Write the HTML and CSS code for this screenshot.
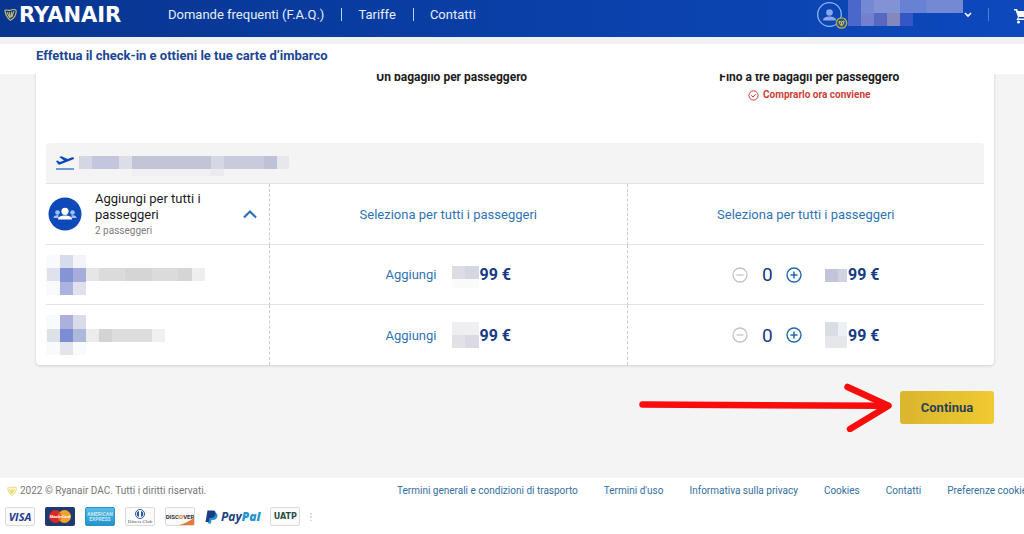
FILE: index.html
```html
<!DOCTYPE html>
<html lang="it">
<head>
<meta charset="utf-8">
<meta name="viewport" content="width=device-width, initial-scale=1">
<title>Ryanair - Bagagli</title>
<link rel="stylesheet" href="styles.css">
</head>
<body>
<svg width="0" height="0" class="defs" aria-hidden="true">
  <symbol id="harp" viewBox="0 0 14 14"><path d="M1 2.500C3 1.600 4.500 3 7 2.500S11 .5 13 2.500C13.500 7 11 11 7 13.300 4 11 1.500 7 1 2.500ZM3.200 4.500l3 6M5.500 4.500l1.500 6M8 4v6M10.500 3.500L8.500 9.500" fill="none" stroke="currentColor" stroke-width="1.200" stroke-linejoin="round"/></symbol>
  <symbol id="minus" viewBox="0 0 16 16"><circle cx="8" cy="8" r="7" fill="none" stroke="currentColor" stroke-width="1.300"/><path d="M4.500 8h7" stroke="currentColor" stroke-width="1.300"/></symbol>
  <symbol id="plus" viewBox="0 0 16 16"><circle cx="8" cy="8" r="7" fill="none" stroke="currentColor" stroke-width="1.400"/><path d="M4.500 8h7M8 4.500v7" stroke="currentColor" stroke-width="1.500"/></symbol>
</svg>

<header class="topbar">
  <a class="logo" href="#"><svg class="logo-harp" aria-hidden="true"><use href="#harp"/></svg><span>RYANAIR</span></a>
  <nav class="topnav">
    <a href="#">Domande frequenti (F.A.Q.)</a>
    <a href="#">Tariffe</a>
    <a href="#">Contatti</a>
  </nav>
  <div class="account">
    <button class="user" type="button" aria-label="Profilo">
      <svg width="31" height="30" viewBox="0 0 31 30" aria-hidden="true">
        <circle cx="12.500" cy="14.500" r="11.800" fill="none" stroke="#8fb4ee" stroke-width="1.300"/>
        <circle cx="12.500" cy="12.500" r="3.300" fill="#8ba8e8"/><path d="M6 20.500c0-3 3-4 6.500-4s6.500 1 6.500 4z" fill="#8ba8e8"/>
        <circle cx="24.500" cy="23" r="5.200" fill="#2f5588" stroke="#b5ad55" stroke-width="1.300"/>
        <path d="M22 21.500q2.500 1 5-.5-.3 3.500-2.500 5-2.300-2-2.500-4.500zM24.500 22v3" fill="none" stroke="#d2c95c"/>
      </svg>
      <svg width="115" height="37" viewBox="0 0 115 37" shape-rendering="crispEdges" aria-hidden="true">
        <path d="M0 0h115v13H0z" fill="#6782d4"/><path d="M0 0h13v26H0z" fill="#4b67cc"/><path d="M13 0h13v13H13zM78 0h37v13H78z" fill="#7489d4"/><path d="M26 0h26v13H26z" fill="#8193d5"/>
        <path d="M13 13h13v13H13z" fill="#7380cb"/><path d="M26 13h13v13H26z" fill="#5768bf"/><path d="M39 13h13v13H39z" fill="#8588bc"/><path d="M52 13h13v13H52z" fill="#3557c5"/>
      </svg>
      <svg width="10" height="8" viewBox="0 0 10 8" aria-hidden="true"><path d="M2 2l3 3 3-3" fill="none" stroke="#fff" stroke-width="1.600"/></svg>
    </button>
    <button class="cart" type="button" aria-label="Carrello">
      <svg width="10" height="16" viewBox="0 0 10 16" aria-hidden="true"><path d="M0 1h3l1 2h6v6H5l-.8 1.600H10v1.500H2.500L4 9 1.600 2.400H0z" fill="#fff"/><circle cx="4.500" cy="14" r="1.500" fill="#fff"/></svg>
    </button>
  </div>
</header>

<div class="titlebar"><h1>Effettua il check-in e ottieni le tue carte d’imbarco</h1></div>

<main class="content">
  <section class="card">
    <table class="bags">
      <colgroup><col class="col-pax"><col><col></colgroup>
      <thead>
        <tr>
          <td></td>
          <th scope="col">Un bagaglio per passeggero</th>
          <th scope="col">Fino a tre bagagli per passeggero
            <span class="deal"><svg width="11" height="11" viewBox="0 0 11 11" aria-hidden="true"><circle cx="5.500" cy="5.500" r="4.600" fill="none" stroke="currentColor"/><path d="M3.200 5.300l1.800 1.700 2.800-2.900" fill="none" stroke="currentColor"/></svg>Comprarlo ora conviene</span>
          </th>
        </tr>
      </thead>
      <tbody>
        <tr class="flight">
          <td colspan="3"><div class="flight-in">
            <svg width="20" height="16" viewBox="0 0 20 16" aria-hidden="true"><path d="M1 6l1.500-.6L4.800 7 9 5.400 4.300 1.900 6.400 1.200 12.600 4.100 16.500 2.600c1-.4 2.200-.3 2.500.3.200.7-.4 1.300-1.300 1.700L5 9.500c-.9.300-1.500.1-2-.4z" fill="#0d47b8"/><path d="M1 14h18" stroke="#3d70c6" stroke-width="1.400"/></svg>
            <svg width="210" height="26" viewBox="0 0 210 26" shape-rendering="crispEdges" aria-hidden="true">
              <path d="M0 6h210v13H0z" fill="#d5d6e3"/><path d="M13 6h27v13H13z" fill="#c3c6dd"/><path d="M40 6h13v13H40z" fill="#dcdde7"/><path d="M53 6h79v13H53z" fill="#c3c4d7"/><path d="M132 6h13v13h-13z" fill="#d5d7e4"/><path d="M145 6h40v13h-40z" fill="#c9cadb"/><path d="M185 6h13v13h-13z" fill="#bfc1d6"/><path d="M198 6h12v13h-12z" fill="#e7e7ed"/><path d="M53 19h79v8H53z" fill="#f0f0f3"/><path d="M132 19h13v8h-13z" fill="#ebebef"/>
            </svg>
          </div></td>
        </tr>
        <tr class="everyone">
          <td><div class="all">
            <svg class="group" width="34" height="34" viewBox="0 0 34 34" aria-hidden="true"><circle cx="17" cy="17" r="16.500" fill="#0e49b9"/><g fill="#9fc0f0"><circle cx="9.500" cy="15.500" r="2.300"/><circle cx="24.500" cy="15.500" r="2.300"/><path d="M5.500 21c0-2.300 2-3 5-3v3zM28.500 21c0-2.300-2-3-5-3v3z"/></g><circle cx="17" cy="14.300" r="3.600" fill="#fff"/><path d="M10 22.500c0-3 3-4 7-4s7 1 7 4z" fill="#fff"/></svg>
            <div class="all-text"><div class="all-name">Aggiungi per tutti i passeggeri</div><div class="all-count">2 passeggeri</div></div>
            <button class="toggle" type="button" aria-label="Comprimi"><svg width="14" height="10" viewBox="0 0 14 10" aria-hidden="true"><path d="M1 8.500l6-6 6 6" fill="none" stroke="#2d6fb5" stroke-width="2.200"/></svg></button>
          </div></td>
          <td class="center"><button class="link" type="button">Seleziona per tutti i passeggeri</button></td>
          <td class="center"><button class="link" type="button">Seleziona per tutti i passeggeri</button></td>
        </tr>
        <tr>
          <td><svg class="pax" width="160" height="40" viewBox="0 0 160 40" shape-rendering="crispEdges" aria-hidden="true">
            <path d="M0 0h40v40H0z" fill="#f8fafd"/><path d="M14 0h13v13H14z" fill="#d6dcea"/><path d="M27 0h13v13H27z" fill="#f2f4f9"/><path d="M1 13h13v13H1zM27 27h13v13H27z" fill="#dfe2ec"/><path d="M14 13h13v14H14z" fill="#8594d5"/><path d="M27 13h13v14H27z" fill="#a7addb"/><path d="M14 27h13v13H14z" fill="#acb3e0"/><path d="M40 13h13v13H40z" fill="#e6e6e7"/><path d="M53 13h93v13H53z" fill="#dadbda"/><path d="M79 13h27v13H79zM132 13h14v13h-14z" fill="#d4d5d4"/><path d="M146 13h13v13h-13z" fill="#eee"/>
          </svg></td>
          <td><div class="offer one"><button class="link" type="button">Aggiungi</button><span class="price"><svg width="28" height="26" viewBox="0 0 28 26" shape-rendering="crispEdges" aria-hidden="true"><path d="M0 4h27v13H0z" fill="#dcdde4"/><path d="M13 4h14v13H13z" fill="#d4d6e0"/><path d="M0 17h27v9H0z" fill="#fafafb"/></svg>99 €</span></div></td>
          <td><div class="offer many"><span class="stepper"><button type="button" aria-label="Rimuovi" disabled><svg aria-hidden="true"><use href="#minus"/></svg></button><output>0</output><button type="button" aria-label="Aggiungi"><svg aria-hidden="true"><use href="#plus"/></svg></button></span><span class="price"><svg width="22" height="26" viewBox="0 0 22 26" shape-rendering="crispEdges" aria-hidden="true"><path d="M0 7h22v13H0z" fill="#c2c4d8"/><path d="M13 7h9v13h-9z" fill="#d0d2e2"/></svg>99 €</span></div></td>
        </tr>
        <tr>
          <td><svg class="pax" width="160" height="40" viewBox="0 0 160 40" shape-rendering="crispEdges" aria-hidden="true">
            <path d="M0 0h40v40H0z" fill="#f8fafd"/><path d="M14 0h13v14H14z" fill="#acb0dd"/><path d="M27 0h13v14H27z" fill="#d8dce8"/><path d="M1 14h13v13H1z" fill="#dfe1e8"/><path d="M14 14h13v13H14z" fill="#7d8dd3"/><path d="M27 14h13v13H27z" fill="#adb8dd"/><path d="M14 27h13v13H14z" fill="#e3e4ec"/><path d="M40 14h13v13H40z" fill="#ececed"/><path d="M53 14h53v13H53z" fill="#dddddd"/><path d="M53 14h13v13H53z" fill="#d4d3d4"/><path d="M106 14h13v13h-13z" fill="#f0f0f3"/>
          </svg></td>
          <td><div class="offer one"><button class="link" type="button">Aggiungi</button><span class="price"><svg width="28" height="26" viewBox="0 0 28 26" shape-rendering="crispEdges" aria-hidden="true"><path d="M0 0h27v13H0z" fill="#efeff2"/><path d="M0 13h27v13H0z" fill="#e1e2e8"/><path d="M13 13h14v13H13z" fill="#d9dae3"/></svg>99 €</span></div></td>
          <td><div class="offer many"><span class="stepper"><button type="button" aria-label="Rimuovi" disabled><svg aria-hidden="true"><use href="#minus"/></svg></button><output>0</output><button type="button" aria-label="Aggiungi"><svg aria-hidden="true"><use href="#plus"/></svg></button></span><span class="price"><svg width="22" height="26" viewBox="0 0 22 26" shape-rendering="crispEdges" aria-hidden="true"><path d="M0 0h22v26H0z" fill="#e5e7ea"/><path d="M0 0h13v14H0z" fill="#dadde3"/><path d="M13 0h9v14h-9z" fill="#edf0f6"/></svg>99 €</span></div></td>
        </tr>
      </tbody>
    </table>
  </section>

  <div class="actions">
    <svg width="254" height="50" viewBox="0 0 254 50" aria-hidden="true"><path d="M4.500 22.500L246 23.800" fill="none" stroke="#f80c0c" stroke-width="6.500" stroke-linecap="round"/><path d="M209.500 5L250.500 23.800 212 47" fill="none" stroke="#f80c0c" stroke-width="6.500" stroke-linecap="round" stroke-linejoin="round"/></svg>
    <button class="continue" type="button">Continua</button>
  </div>
</main>

<footer class="footer">
  <div class="legal">
    <div class="copy"><svg class="copy-harp" aria-hidden="true"><use href="#harp"/></svg>2022 © Ryanair DAC. Tutti i diritti riservati.</div>
    <nav class="links">
      <a href="#">Termini generali e condizioni di trasporto</a><a href="#">Termini d'uso</a><a href="#">Informativa sulla privacy</a><a href="#">Cookies</a><a href="#">Contatti</a><a href="#">Preferenze cookie</a>
    </nav>
  </div>
  <div class="cards">
    <span class="pay visa">VISA</span>
    <span class="pay mc"><svg width="30" height="19" viewBox="0 0 30 19" aria-hidden="true"><circle cx="10.500" cy="9.500" r="6.500" fill="#d92a25"/><circle cx="19.500" cy="9.500" r="6.500" fill="#f3a22c"/><path d="M15 5a6.500 6.500 0 0 1 0 9 6.500 6.500 0 0 1 0-9z" fill="#e8692a"/></svg><span class="mc-name">MasterCard</span></span>
    <span class="pay amex"><span>AMERICAN</span><span>EXPRESS</span></span>
    <span class="pay diners"><svg width="12" height="10" viewBox="0 0 12 10" aria-hidden="true"><circle cx="6" cy="5" r="4.500" fill="#fff" stroke="#2459a0"/><path d="M5 2v6a3.100 3.100 0 0 1 0-6zM7 2v6a3.100 3.100 0 0 0 0-6z" fill="#2459a0"/></svg><span>Diners Club</span></span>
    <span class="pay discover"><svg class="swoosh" width="30" height="19" viewBox="0 0 30 19" aria-hidden="true"><path d="M9 19Q22 17 30 10v7q0 2-2 2z" fill="#e87935"/></svg><span>DISC<b>O</b>VER</span></span>
    <span class="paypal"><svg width="13" height="14" viewBox="0 0 13 14" aria-hidden="true"><path d="M4.500 3h5c3 0 3.500 2 2.800 4S10 10 8 10H6.500L6 13.500H3z" fill="#2694d4"/><path d="M2.500.5h5c3 0 3.600 1.800 3 4S8 8 6 8H4.500l-.8 4H.5z" fill="#173d86"/></svg><span>Pay<b>Pal</b></span></span>
    <span class="pay uatp">UATP</span>
    <svg width="3" height="10" viewBox="0 0 3 10" aria-hidden="true"><path d="M1 1v2M1 4v2M1 8v1" stroke="#c5bd9e"/></svg>
  </div>
</footer>
</body>
</html>
```
FILE: styles.css
```css
* { box-sizing: border-box; }
body {
  margin: 0;
  min-height: 100vh;
  display: flex;
  flex-direction: column;
  background: #f4f4f4;
  color: #1c1c1c;
  font-family: Roboto, "Liberation Sans", sans-serif;
  font-size: 13px;
  overflow-x: hidden;
}
svg { display: block; flex: none; }
a { color: inherit; text-decoration: none; }
button { font: inherit; color: inherit; background: none; border: 0; padding: 0; cursor: pointer; }
.defs { position: absolute; }

.topbar {
  display: flex;
  height: 37px;
  padding-left: 4px;
  color: #e4eefc;
  background: linear-gradient(90deg, #073590, #0d49bd);
  overflow: hidden;
}
.logo { display: flex; align-items: center; gap: 2px; width: 164px; height: 29px; color: #fff; font: bold 21px "DejaVu Sans", sans-serif; }
.logo-harp { width: 13px; height: 13px; color: #c9c16b; }
.topnav { display: flex; align-items: center; height: 29px; }
.topnav a { line-height: 13px; }
.topnav a + a { margin-left: 17px; padding-left: 16px; border-left: 1px solid #b9d2f5; }
.account { display: flex; margin-left: auto; }
.user { display: flex; align-items: flex-start; height: 37px; }
.user svg:last-child { margin-top: 11px; }
.cart { display: flex; height: 13px; margin: 8px 0 0 15px; padding-left: 25px; border-left: 1px solid #4f7fd4; }

.titlebar { padding: 4px 36px 0; height: 37px; background: #fff; border-top: 7px solid #f0f1f2; }
.titlebar h1 { margin: 0; font-size: 13px; line-height: 16px; color: #1c4594; }

.content { padding: 0 30px 46px 36px; overflow: hidden; }
.card { padding: 0 10px; background: #fff; border-radius: 0 0 4px 4px; box-shadow: 0 1px 3px #cfcfcf; }
.bags { width: 100%; table-layout: fixed; border-collapse: separate; border-spacing: 0; margin-top: -5px; }
.col-pax { width: 223px; }
.bags td, .bags th { padding: 0; }
.bags thead tr { height: 74px; }
.bags th { vertical-align: top; padding-left: 8px; font-size: 12px; font-weight: bold; line-height: 16px; color: #1c1c1c; }
.deal { display: flex; justify-content: center; align-items: center; gap: 4px; margin-top: 2px; color: #cc4038; font-size: 10px; font-weight: bold; }
.bags tbody td { height: 60px; border-bottom: 1px solid #e3e3e5; }
.bags tbody td + td { border-left: 1px dashed #ccc; }
.bags tbody tr:last-child td { border-bottom: 0; }
.bags tbody .flight td { height: 41px; }
.bags tbody .everyone td { height: 61px; }
.flight td { background: #f4f4f4; border-radius: 4px 4px 0 0; }
.flight-in { display: flex; align-items: center; gap: 4px; padding-left: 9px; }

.all { display: flex; align-items: center; padding: 0 12px 0 2px; }
.all-text { width: 124px; margin-left: 13px; line-height: 16px; }
.all-name { padding-top: 2px; font-size: 13px; }
.all-count { font-size: 10px; color: #7d7d7d; }
.toggle { margin-left: auto; }
.center { text-align: center; }
.link { color: #2f74b5; }
.offer { display: flex; align-items: center; justify-content: center; }
.one { gap: 15px; }
.many { gap: 23px; }
.price { display: flex; align-items: center; font-size: 16px; font-weight: bold; color: #173b84; }
.many .price { gap: 1px; }
.stepper { display: flex; align-items: center; gap: 14px; color: #2467b0; }
.stepper output { width: 10px; text-align: center; font-size: 19px; color: #173b84; }
.stepper button:disabled { color: #c4c4c4; }
.stepper svg { width: 16px; height: 16px; }

.actions { display: flex; justify-content: flex-end; align-items: center; gap: 8px; margin-top: 17px; height: 50px; }
.continue { flex: 0 0 94px; height: 33px; border-radius: 3px; background: linear-gradient(90deg, #dab52e, #efca32); color: #2b4154; font-weight: bold; }

.footer { flex: 1; background: #fff; padding: 5px 0 0 5px; overflow: hidden; font-size: 10px; }
.legal { display: flex; line-height: 16px; white-space: nowrap; }
.copy { display: flex; align-items: center; flex: 0 0 392px; gap: 3px; padding-left: 2px; color: #777; }
.copy-harp { width: 10px; height: 10px; color: #e5d34a; }
.links { display: flex; gap: 26px; color: #34709f; }
.cards { display: flex; align-items: center; gap: 10px; margin-top: 8px; }
.pay { position: relative; display: flex; flex-direction: column; align-items: center; justify-content: center; width: 30px; height: 19px; border: 1px solid #dcdcdc; border-radius: 2px; background: #fafafa; overflow: hidden; }
.visa { color: #1e3c8c; font: italic bold 11px "Open Sans", sans-serif; }
.mc { border: 0; background: #1f3a70; }
.mc-name { position: absolute; left: 0; right: 0; text-align: center; color: #fff; font: italic bold 4px/19px Roboto, sans-serif; }
.amex { border-color: #2c92c8; background: linear-gradient(#58bce8, #2492cd); color: #c8e9f8; font: bold 5px/5px Roboto, sans-serif; }
.diners { color: #555; font: 5px/6px "Liberation Serif", serif; }
.discover { color: #333; font: bold 6px/8px Roboto, sans-serif; }
.discover b { color: #e87935; }
.swoosh { position: absolute; left: -1px; top: -1px; }
.paypal { display: flex; align-items: center; gap: 3px; color: #203f82; font: italic bold 12px "Open Sans", sans-serif; }
.paypal b { color: #2593cf; }
.uatp { color: #25503f; font: bold 8px "DejaVu Sans", sans-serif; }
```
